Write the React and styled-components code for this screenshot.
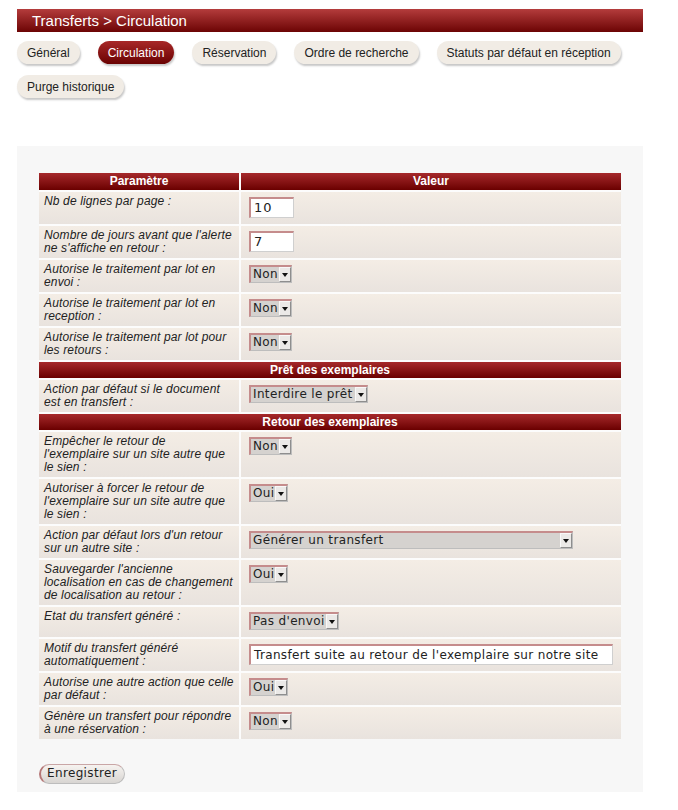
import React from "react";
import styled, { createGlobalStyle } from "styled-components";

const Global = createGlobalStyle`
  html, body { margin: 0; padding: 0; background: #ffffff; }
  body { font-family: "Liberation Sans", Arial, sans-serif; color: #222; }
`;

const Page = styled.div`
  width: 626px;
  padding: 9px 0 0 17px;
`;

const TitleBar = styled.div`
  height: 23px;
  line-height: 23px;
  padding-left: 15px;
  color: #fff;
  font-size: 15px;
  background: linear-gradient(#b43c3c, #6c0404);
`;

const Tabs = styled.div`
  display: flex;
  flex-wrap: wrap;
  gap: 11px 18px;
  margin-top: 9px;
`;

const Tab = styled.div`
  height: 23px;
  line-height: 24px;
  padding: 0 10px;
  border-radius: 12px;
  font-size: 12px;
  white-space: nowrap;
  color: ${(p) => (p.$active ? "#fff" : "#222")};
  background: ${(p) =>
    p.$active ? "linear-gradient(#a82828, #6a0202)" : "#f1ece5"};
  box-shadow: 1px 2px 2px rgba(0, 0, 0, 0.22);
`;

const Panel = styled.div`
  margin-top: 48px;
  background: #f7f7f7;
  padding: 27px 22px 8px;
`;

const Grid = styled.div`
  display: grid;
  grid-template-columns: 200px 380px;
  gap: 2px;
  background: #fcfcfc;
`;

const HeadCell = styled.div`
  grid-column: ${(p) => (p.$full ? "1 / -1" : "auto")};
  height: ${(p) => (p.$full ? 16 : 17)}px;
  line-height: ${(p) => (p.$full ? 16 : 17)}px;
  text-align: center;
  color: #fff;
  font-weight: bold;
  font-size: 12px;
  background: linear-gradient(#a6292b, #6a0000);
`;

const LabelCell = styled.div`
  padding: 3px 5px;
  font-size: 12px;
  line-height: 13px;
  letter-spacing: 0.14px;
  font-style: italic;
  color: #222;
  background: linear-gradient(#f4ede5, #e9e3de);
`;

const ValueCell = styled.div`
  display: flex;
  align-items: flex-start;
  padding: 3px 4px;
  background: linear-gradient(#f4ede5, #e9e3de);
`;

const TextInput = styled.div`
  box-sizing: border-box;
  width: ${(p) => p.$w}px;
  height: 21px;
  margin: 2px 4px 3px;
  padding-left: 3px;
  background: #fff;
  border-top: 2px solid #c58c8c;
  border-left: 2px solid #c58c8c;
  border-right: 1px solid #cfcfcf;
  border-bottom: 1px solid #cfcfcf;
  font-family: "DejaVu Sans", sans-serif;
  font-size: ${(p) => (p.$num ? 13 : 12)}px;
  line-height: 18px;
  letter-spacing: ${(p) => (p.$num ? "1px" : "0.35px")};
  color: #222;
  white-space: nowrap;
  overflow: hidden;
`;

const SelectBox = styled.div`
  box-sizing: border-box;
  display: flex;
  width: ${(p) => p.$w}px;
  height: 18px;
  margin: 2px 4px 4px;
  background: #d5d2cf;
  border-top: 2px solid #c58c8c;
  border-left: 2px solid #c58c8c;
  border-right: 1px solid #bdbdbd;
  border-bottom: 1px solid #bdbdbd;
  font-family: "DejaVu Sans", sans-serif;
  font-size: 12px;
  letter-spacing: 0.35px;
  color: #222;
`;

const SelectText = styled.span`
  flex: 1;
  padding-left: 2px;
  line-height: 15px;
  white-space: nowrap;
  overflow: hidden;
`;

const Arrow = styled.span`
  box-sizing: border-box;
  flex: none;
  width: 12px;
  height: 15px;
  display: flex;
  align-items: center;
  justify-content: center;
  background: #ebe9e7;
  border-top: 1px solid #f8f8f8;
  border-left: 1px solid #f8f8f8;
  border-right: 1px solid #8e8e8e;
  border-bottom: 1px solid #8e8e8e;
  &::after {
    content: "";
    border-left: 3px solid transparent;
    border-right: 3px solid transparent;
    border-top: 4px solid #111;
  }
`;

const SaveButton = styled.div`
  display: inline-block;
  box-sizing: border-box;
  height: 20px;
  line-height: 17px;
  margin-top: 25px;
  padding: 0 7px 0 6px;
  border-radius: 10px;
  border: 1px solid #bdbdbd;
  border-left: 2px solid #b57676;
  border-top-color: #c9a6a6;
  background: linear-gradient(#f6f3f0, #d8d5d2);
  font-family: "DejaVu Sans", sans-serif;
  font-size: 12px;
  letter-spacing: 0.35px;
  color: #222;
`;

const Select = ({ w, value }) => (
  <SelectBox $w={w}>
    <SelectText>{value}</SelectText>
    <Arrow />
  </SelectBox>
);

const tabs = [
  "Général",
  "Circulation",
  "Réservation",
  "Ordre de recherche",
  "Statuts par défaut en réception",
  "Purge historique",
];

const sections = [
  {
    title: null,
    rows: [
      { label: "Nb de lignes par page :", input: { w: 45, v: "10", num: true } },
      {
        label: "Nombre de jours avant que l'alerte ne s'affiche en retour :",
        input: { w: 45, v: "7", num: true },
      },
      { label: "Autorise le traitement par lot en envoi :", select: { w: 43, v: "Non" } },
      { label: "Autorise le traitement par lot en reception :", select: { w: 43, v: "Non" } },
      { label: "Autorise le traitement par lot pour les retours :", select: { w: 43, v: "Non" } },
    ],
  },
  {
    title: "Prêt des exemplaires",
    rows: [
      {
        label: "Action par défaut si le document est en transfert :",
        select: { w: 119, v: "Interdire le prêt" },
      },
    ],
  },
  {
    title: "Retour des exemplaires",
    rows: [
      {
        label: "Empêcher le retour de l'exemplaire sur un site autre que le sien :",
        select: { w: 43, v: "Non" },
      },
      {
        label: "Autoriser à forcer le retour de l'exemplaire sur un site autre que le sien :",
        select: { w: 39, v: "Oui" },
      },
      {
        label: "Action par défaut lors d'un retour sur un autre site :",
        select: { w: 324, v: "Générer un transfert" },
      },
      {
        label:
          "Sauvegarder l'ancienne localisation en cas de changement de localisation au retour :",
        select: { w: 39, v: "Oui" },
      },
      { label: "Etat du transfert généré :", select: { w: 90, v: "Pas d'envoi" } },
      {
        label: "Motif du transfert généré automatiquement :",
        input: { w: 366, v: "Transfert suite au retour de l'exemplaire sur notre site" },
      },
      {
        label: "Autorise une autre action que celle par défaut :",
        select: { w: 39, v: "Oui" },
      },
      {
        label: "Génère un transfert pour répondre à une réservation :",
        select: { w: 43, v: "Non" },
      },
    ],
  },
];

export default function App() {
  return (
    <>
      <Global />
      <Page>
        <TitleBar>Transferts &gt; Circulation</TitleBar>
        <Tabs>
          {tabs.map((t) => (
            <Tab key={t} $active={t === "Circulation"}>
              {t}
            </Tab>
          ))}
        </Tabs>
        <Panel>
          <Grid>
            <HeadCell>Paramètre</HeadCell>
            <HeadCell>Valeur</HeadCell>
            {sections.map((s, si) => (
              <React.Fragment key={si}>
                {s.title && <HeadCell $full>{s.title}</HeadCell>}
                {s.rows.map((r, ri) => (
                  <React.Fragment key={ri}>
                    <LabelCell>{r.label}</LabelCell>
                    <ValueCell>
                      {r.input ? (
                        <TextInput $w={r.input.w} $num={r.input.num}>
                          {r.input.v}
                        </TextInput>
                      ) : (
                        <Select w={r.select.w} value={r.select.v} />
                      )}
                    </ValueCell>
                  </React.Fragment>
                ))}
              </React.Fragment>
            ))}
          </Grid>
          <SaveButton>Enregistrer</SaveButton>
        </Panel>
      </Page>
    </>
  );
}
